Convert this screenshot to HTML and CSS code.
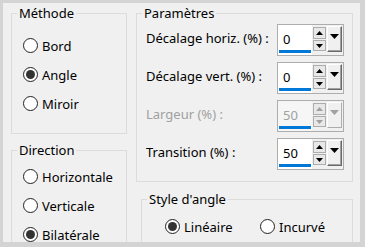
FILE: index.html
```html
<!DOCTYPE html>
<html>
  <head>
    <title>Angle</title>
    <link rel="stylesheet" href="styles.css">
  </head>
  <body>
    <div class="dialog">
      <div class="col-left">
        <fieldset class="group method">
          <legend>Méthode</legend>
          <div class="radio"><span class="dot"></span>Bord</div>
          <div class="radio"><span class="dot on"></span>Angle</div>
          <div class="radio"><span class="dot"></span>Miroir</div>
        </fieldset>
        <fieldset class="group direction">
          <legend>Direction</legend>
          <div class="radio"><span class="dot"></span>Horizontale</div>
          <div class="radio"><span class="dot"></span>Verticale</div>
          <div class="radio"><span class="dot on"></span>Bilatérale</div>
        </fieldset>
      </div>
      <div class="col-right">
        <fieldset class="group params">
          <legend>Paramètres</legend>
          <div class="row">
            <span class="label">Décalage horiz. (%) :</span>
            <div class="spin">
              <div class="field"><span class="value">0</span><span class="bar"></span></div>
              <div class="steps">
                <span class="step up"><svg width="7" height="4"><path d="M0 4L3.5 0L7 4Z"/></svg></span>
                <span class="step down"><svg width="7" height="4"><path d="M0 0L3.5 4L7 0Z"/></svg></span>
              </div>
              <span class="drop"><svg width="9" height="5"><path d="M0 0L4.5 5L9 0Z"/></svg></span>
            </div>
          </div>
          <div class="row">
            <span class="label">Décalage vert. (%) :</span>
            <div class="spin">
              <div class="field"><span class="value">0</span><span class="bar"></span></div>
              <div class="steps">
                <span class="step up"><svg width="7" height="4"><path d="M0 4L3.5 0L7 4Z"/></svg></span>
                <span class="step down"><svg width="7" height="4"><path d="M0 0L3.5 4L7 0Z"/></svg></span>
              </div>
              <span class="drop"><svg width="9" height="5"><path d="M0 0L4.5 5L9 0Z"/></svg></span>
            </div>
          </div>
          <div class="row disabled">
            <span class="label">Largeur (%) :</span>
            <div class="spin">
              <div class="field"><span class="value">50</span><span class="bar"></span></div>
              <div class="steps">
                <span class="step up"><svg width="7" height="4"><path d="M0 4L3.5 0L7 4Z"/></svg></span>
                <span class="step down"><svg width="7" height="4"><path d="M0 0L3.5 4L7 0Z"/></svg></span>
              </div>
              <span class="drop"><svg width="9" height="5"><path d="M0 0L4.5 5L9 0Z"/></svg></span>
            </div>
          </div>
          <div class="row">
            <span class="label">Transition (%) :</span>
            <div class="spin">
              <div class="field"><span class="value">50</span><span class="bar"></span></div>
              <div class="steps">
                <span class="step up"><svg width="7" height="4"><path d="M0 4L3.5 0L7 4Z"/></svg></span>
                <span class="step down"><svg width="7" height="4"><path d="M0 0L3.5 4L7 0Z"/></svg></span>
              </div>
              <span class="drop"><svg width="9" height="5"><path d="M0 0L4.5 5L9 0Z"/></svg></span>
            </div>
          </div>
        </fieldset>
        <fieldset class="group style">
          <legend>Style d'angle</legend>
          <div class="inline">
            <div class="radio first"><span class="dot on"></span>Linéaire</div>
            <div class="radio"><span class="dot"></span>Incurvé</div>
          </div>
        </fieldset>
      </div>
    </div>
  </body>
</html>
```
FILE: styles.css
```css
body {
  margin: 0;
  font-family: "Noto Sans", sans-serif;
  font-size: 13px;
  color: #000;
}
.dialog {
  width: 365px;
  height: 247px;
  box-sizing: border-box;
  border-style: solid;
  border-color: #d4d4d4;
  border-width: 3px 5px 5px 3px;
  background-color: #f0f0f0;
  display: flex;
  overflow: hidden;
}
.col-left {
  padding-left: 8px;
  padding-top: 2px;
  width: 116px;
  flex-shrink: 0;
}
.col-right {
  margin-left: 9px;
  padding-top: 2px;
  width: 217px;
  flex-shrink: 0;
}
.group {
  margin: 0;
  padding: 0;
  border: 1px solid #dcdcdc;
  box-sizing: border-box;
  min-width: 0;
}
.group legend {
  margin-left: 5px;
  padding: 0 2px;
  line-height: 16px;
}
.method {
  height: 129px;
  padding-top: 10px;
}
.direction {
  margin-top: 8px;
  height: 120px;
  padding-top: 4px;
}
.radio {
  height: 29px;
  display: flex;
  align-items: center;
  padding-left: 11px;
}
.dot {
  width: 15px;
  height: 15px;
  box-sizing: border-box;
  border: 1px solid #222;
  border-radius: 50%;
  background-color: #fff;
  margin-right: 4px;
  display: flex;
  align-items: center;
  justify-content: center;
}
.dot.on::after {
  content: "";
  width: 9px;
  height: 9px;
  border-radius: 50%;
  background-color: #333;
}
.params {
  height: 177px;
  padding-top: 3px;
}
.row {
  display: flex;
  align-items: center;
  justify-content: space-between;
  height: 32px;
  margin-bottom: 6px;
  padding: 0 8px 0 9px;
}
.label {
  margin-bottom: 4px;
}
.spin {
  display: flex;
  width: 67px;
  height: 32px;
  box-sizing: border-box;
  border: 1px solid #adadad;
  background-color: #f0f0f0;
}
.field {
  width: 34px;
  background-color: #fff;
  display: flex;
  flex-direction: column;
  justify-content: flex-end;
  padding: 0 1px 2px 1px;
  box-sizing: border-box;
}
.value {
  padding-left: 4px;
  line-height: 16px;
  margin-bottom: 3px;
}
.bar {
  height: 3px;
  background-color: #0078d7;
}
.steps {
  display: flex;
  flex-direction: column;
  gap: 1px;
  margin: 2px 0 0 1px;
}
.step {
  width: 13px;
  height: 12px;
  box-sizing: border-box;
  border: 1px solid #adadad;
  background-color: #e8e8e8;
  display: flex;
  align-items: center;
  justify-content: center;
}
.step.down {
  height: 11px;
}
.drop {
  width: 15px;
  height: 26px;
  margin: 1px 0 0 1px;
  box-sizing: border-box;
  border-style: solid;
  border-width: 1px;
  border-color: #fff #696969 #696969 #fff;
  box-shadow: inset -1px -1px 0 #a0a0a0;
  display: flex;
  justify-content: center;
  padding-top: 7px;
}
.disabled .label,
.disabled .value {
  color: #a0a0a0;
}
.disabled .field {
  background-color: #f6f6f6;
}
.disabled svg {
  fill: #a0a0a0;
}
.disabled .drop {
  border-color: #fff #adadad #adadad #fff;
  box-shadow: none;
}
.style {
  margin: 9px 0 0 5px;
  height: 80px;
  padding-top: 5px;
}
.inline {
  display: flex;
  padding-left: 12px;
}
.inline .radio {
  padding-left: 11px;
}
.inline .radio.first {
  width: 106px;
  box-sizing: border-box;
}
.inline .radio + .radio {
  padding-left: 0;
}
```
